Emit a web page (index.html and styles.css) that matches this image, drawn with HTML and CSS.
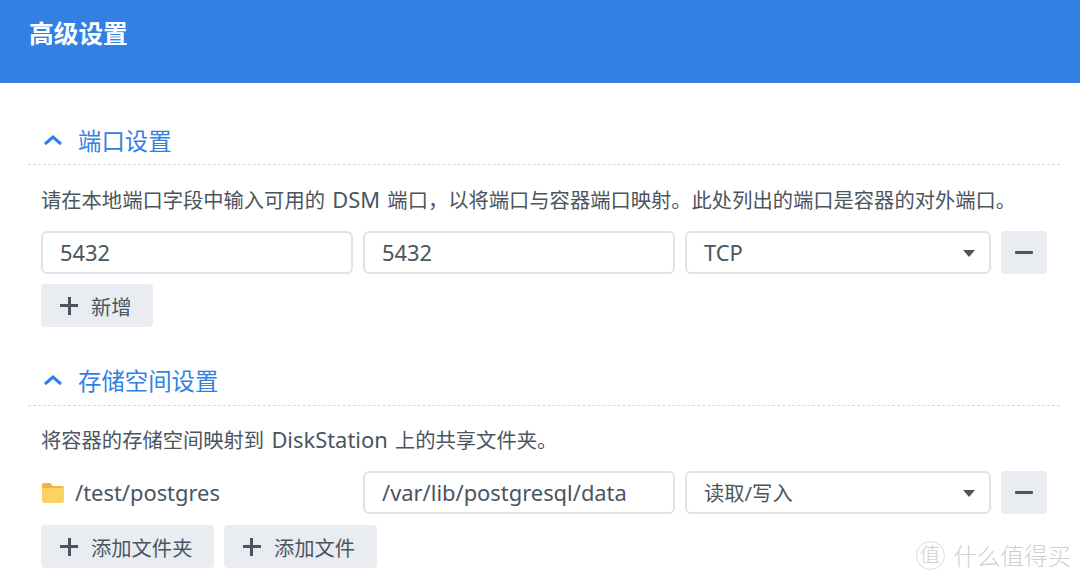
FILE: index.html
```html
<!DOCTYPE html>
<html lang="zh-CN">
<head>
  <meta charset="UTF-8" />
  <title>高级设置</title>
  <link rel="stylesheet" href="styles.css">
</head>
<body>
  <header class="top-bar">
    <h1>高级设置</h1>
  </header>

  <main class="content">
    <!-- 端口设置 -->
    <section class="group">
      <h2 class="group-title">
        <svg class="chevron" width="20" height="12" viewBox="0 0 20 12"><path d="M2 10 L10 3 L18 10" fill="none" stroke="#3380e5" stroke-width="3"/></svg>
        端口设置
      </h2>
      <p class="desc">请在本地端口字段中输入可用的 <span class="latin">DSM</span> 端口，以将端口与容器端口映射。此处列出的端口是容器的对外端口。</p>
      <div class="row">
        <div class="field latin">5432</div>
        <div class="field latin">5432</div>
        <div class="field latin">TCP<span class="caret"></span></div>
        <button class="btn btn-icon"><span class="minus"></span></button>
      </div>
      <div class="actions">
        <button class="btn btn-add"><span class="plus"></span>新增</button>
      </div>
    </section>

    <!-- 存储空间设置 -->
    <section class="group group-volume">
      <h2 class="group-title">
        <svg class="chevron" width="20" height="12" viewBox="0 0 20 12"><path d="M2 10 L10 3 L18 10" fill="none" stroke="#3380e5" stroke-width="3"/></svg>
        存储空间设置
      </h2>
      <p class="desc">将容器的存储空间映射到 <span class="latin">DiskStation</span> 上的共享文件夹。</p>
      <div class="row">
        <div class="folder-cell latin">
          <svg width="22" height="20" viewBox="0 0 22 20"><path d="M0 2 Q0 0 2 0 H8 L11 3 H20 Q22 3 22 5 V6 H0 Z" fill="#f2b33d"/><path d="M0 5 H22 V18 Q22 20 20 20 H2 Q0 20 0 18 Z" fill="#fbd266"/></svg>
          /test/postgres
        </div>
        <div class="field latin">/var/lib/postgresql/data</div>
        <div class="field field-cjk">读取/写入<span class="caret"></span></div>
        <button class="btn btn-icon"><span class="minus"></span></button>
      </div>
      <div class="actions">
        <button class="btn btn-add"><span class="plus"></span>添加文件夹</button>
        <button class="btn btn-add"><span class="plus"></span>添加文件</button>
      </div>
    </section>
  </main>

  <div class="watermark">
    <span class="wm-logo">值</span>什么值得买
  </div>
</body>
</html>
```

FILE: styles.css
```css
body {
  margin: 0;
  height: 583px;
  overflow: hidden;
  background: #fff;
  color: #4a5560;
  font-family: "Noto Sans", "Noto Sans CJK SC", sans-serif;
  font-size: 20.3px;
}
.latin {
  font-size: 21.9px;
}
.top-bar {
  height: 83px;
  background: #3380e5;
  box-sizing: border-box;
  padding: 16px 29px 0;
}
.top-bar h1 {
  margin: 0;
  color: #fff;
  font-size: 24.7px;
  line-height: 36px;
  font-weight: 700;
}
.content {
  padding: 0 20px 0 28px;
}
.group {
  padding: 0 0 34px;
}
.group:first-child {
  padding-top: 37px;
}
.group-title {
  display: flex;
  align-items: center;
  gap: 15px;
  height: 45px;
  box-sizing: border-box;
  margin: 0;
  padding: 0 0 5px 15px;
  border-bottom: 1px dashed #d3dbe3;
  color: #3380e5;
  font-size: 23.4px;
  font-weight: 400;
}
.desc {
  margin: 0;
  padding: 21px 0 0 13px;
  line-height: 28px;
  height: 28px;
  word-spacing: 2px;
}
.row {
  display: grid;
  grid-template-columns: 312px 312px 306px 46px;
  gap: 10px;
  margin: 17px 0 0 13px;
  height: 43px;
}
.group-volume .group-title {
  padding-bottom: 7px;
}
.group-volume .desc {
  padding-top: 20px;
}
.group-volume .actions {
  margin-top: 11px;
}
.field {
  position: relative;
  box-sizing: border-box;
  height: 43px;
  padding: 0 17px;
  border: 2px solid #dce3eb;
  border-radius: 6px;
  line-height: 39px;
}
.field-cjk {
  line-height: 41px;
}
.caret {
  position: absolute;
  right: 14px;
  top: 17px;
  border-top: 7px solid #4a5560;
  border-left: 6.5px solid transparent;
  border-right: 6.5px solid transparent;
}
.folder-cell {
  display: flex;
  align-items: center;
  gap: 11px;
  padding-left: 1px;
}
.btn {
  display: flex;
  align-items: center;
  height: 43px;
  border: 0;
  border-radius: 4px;
  background: #e9edf2;
  color: #4a5560;
  font-family: inherit;
  font-size: 20.3px;
}
.btn-icon {
  justify-content: center;
  padding: 0;
}
.btn-add {
  padding: 0 21.5px 0 19px;
}
.minus {
  width: 18px;
  height: 3px;
  border-radius: 1px;
  background: #4a5560;
}
.plus {
  position: relative;
  width: 18px;
  height: 18px;
  margin-right: 13px;
  background:
    linear-gradient(#4a5560, #4a5560) center / 18px 3px no-repeat,
    linear-gradient(#4a5560, #4a5560) center / 3px 18px no-repeat;
}
.actions {
  display: flex;
  gap: 10px;
  margin: 10px 0 0 13px;
}
.watermark {
  position: absolute;
  right: 9px;
  top: 538px;
  display: flex;
  align-items: center;
  gap: 9px;
  color: #d0d0d0;
  font-size: 23.5px;
  font-weight: 300;
}
.wm-logo {
  width: 27px;
  height: 27px;
  border: 1px solid #ddd;
  border-radius: 50%;
  text-align: center;
  line-height: 25px;
  font-size: 20px;
}
```
